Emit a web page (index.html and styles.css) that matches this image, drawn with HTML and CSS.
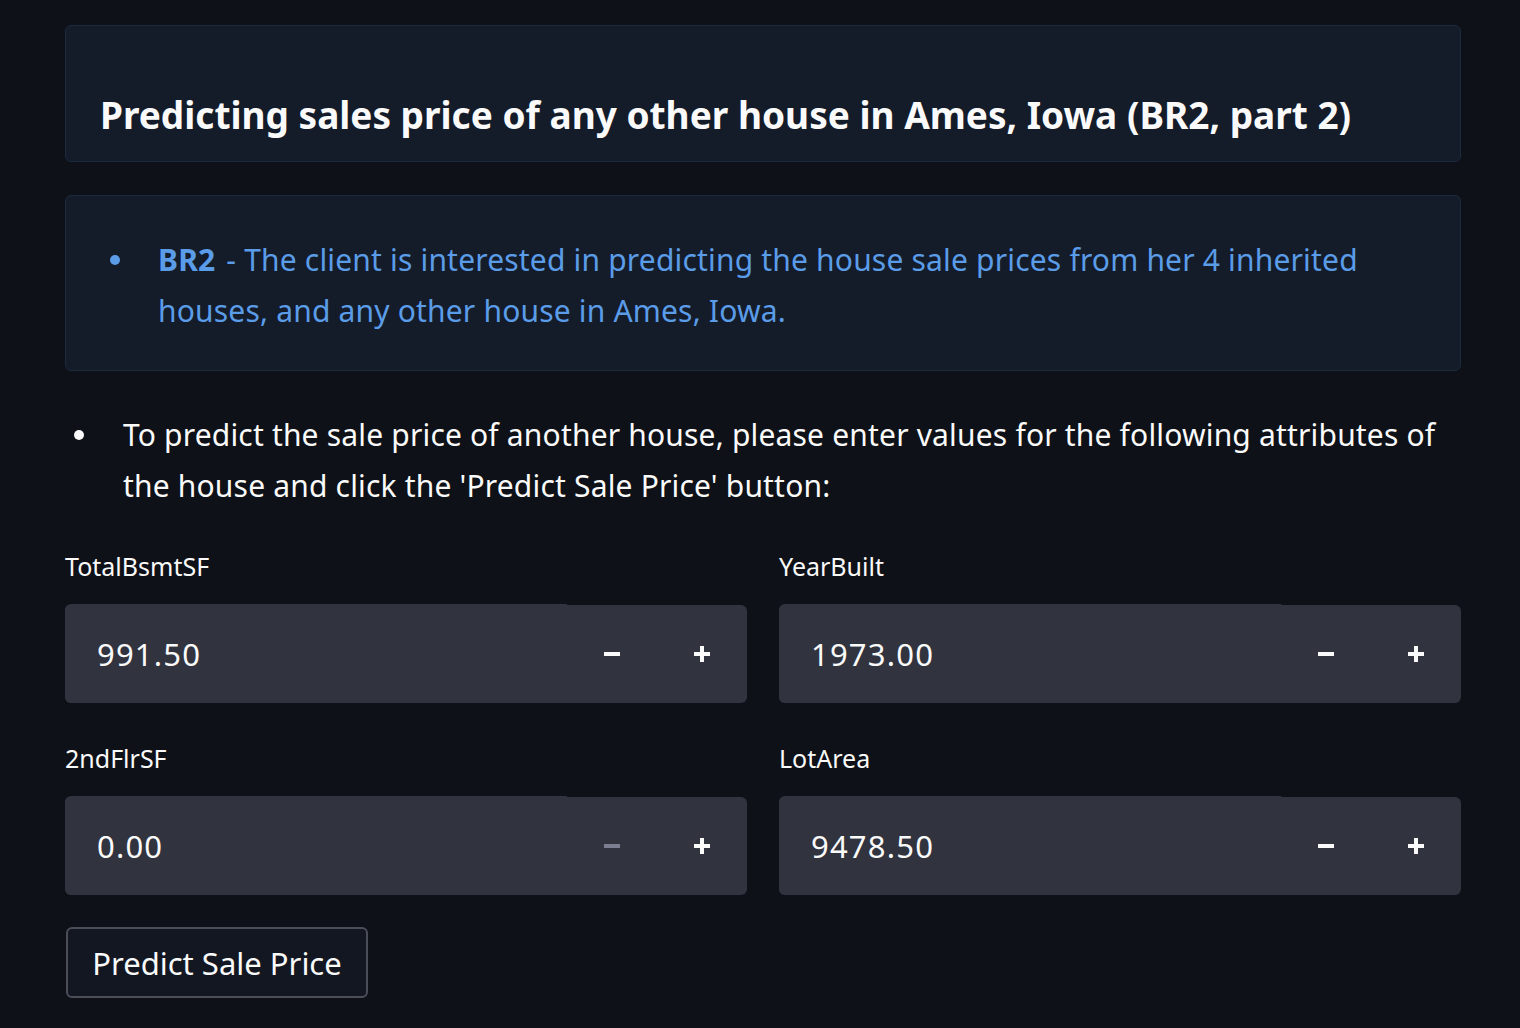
FILE: index.html
```html
<!DOCTYPE html>
<html>
<head>
<meta charset="utf-8">
<link rel="stylesheet" href="styles.css">
</head>
<body>
<main class="page">
  <div class="title-box">
    <h3 class="title">Predicting sales price of any other house in Ames, Iowa (BR2, part 2)</h3>
  </div>
  <div class="info-box">
    <ul class="info-list">
      <li><strong>BR2</strong> - The client is interested in predicting the house sale prices from her 4 inherited houses, and any other house in Ames, Iowa.</li>
    </ul>
  </div>
  <ul class="main-list">
    <li>To predict the sale price of another house, please enter values for the following attributes of the house and click the 'Predict Sale Price' button:</li>
  </ul>
  <div class="grid">
    <div class="field">
      <label class="label">TotalBsmtSF</label>
      <div class="num">
        <div class="num-value">991.50</div>
        <div class="num-btns">
          <span class="btn-step"><span class="minus"></span></span>
          <span class="btn-step"><span class="plus"></span></span>
        </div>
      </div>
    </div>
    <div class="field">
      <label class="label">YearBuilt</label>
      <div class="num">
        <div class="num-value">1973.00</div>
        <div class="num-btns">
          <span class="btn-step"><span class="minus"></span></span>
          <span class="btn-step"><span class="plus"></span></span>
        </div>
      </div>
    </div>
    <div class="field">
      <label class="label">2ndFlrSF</label>
      <div class="num">
        <div class="num-value">0.00</div>
        <div class="num-btns">
          <span class="btn-step"><span class="minus disabled"></span></span>
          <span class="btn-step"><span class="plus"></span></span>
        </div>
      </div>
    </div>
    <div class="field">
      <label class="label">LotArea</label>
      <div class="num">
        <div class="num-value">9478.50</div>
        <div class="num-btns">
          <span class="btn-step"><span class="minus"></span></span>
          <span class="btn-step"><span class="plus"></span></span>
        </div>
      </div>
    </div>
  </div>
  <button class="predict">Predict Sale Price</button>
</main>
</body>
</html>
```

FILE: styles.css
```css
html, body {
  margin: 0;
  padding: 0;
  background: #0e1117;
  color: #fafafa;
  font-family: "Noto Sans", "Open Sans", sans-serif;
}
.page {
  width: 1396px;
  margin-left: 65px;
  padding-top: 25px;
}
.title-box {
  background: #141c2a;
  border: 1px solid #1c2a40;
  border-radius: 6px;
  padding: 62px 34px 20px;
  box-sizing: border-box;
  height: 137px;
}
.title {
  margin: 0;
  font-size: 37px;
  font-weight: 700;
  line-height: 54px;
  color: #fafafa;
}
.info-box {
  margin-top: 33px;
  background: #141c2a;
  border: 1px solid #1c2a40;
  border-radius: 6px;
  box-sizing: border-box;
  height: 176px;
  padding: 38px 34px 0 0;
  color: #5b9ce8;
}
.info-list, .main-list {
  margin: 0;
  list-style: none;
  padding-left: 92px;
  font-size: 30px;
  letter-spacing: 0.18px;
  line-height: 51px;
}
.info-list li, .main-list li {
  position: relative;
}
.info-list li::before, .main-list li::before {
  content: "";
  position: absolute;
  width: 10px;
  height: 10px;
  border-radius: 50%;
  background: currentColor;
  top: 21px;
}
.info-list li::before { left: -48px; }
.main-list li::before { left: -49px; }
.info-list strong {
  font-weight: 700;
  margin-right: 3px;
}
.main-list {
  margin-top: 38px;
  padding-left: 58px;
  color: #fafafa;
}
.grid {
  margin-top: 34px;
  display: grid;
  grid-template-columns: 682px 682px;
  column-gap: 32px;
  row-gap: 34px;
}
.label {
  display: block;
  font-size: 25px;
  line-height: 42px;
  height: 60px;
  color: #fafafa;
}
.num {
  display: flex;
  height: 98px;
  background: #31333f;
  border-radius: 6px;
}
.num-value {
  flex: 0 0 502px;
  box-sizing: border-box;
  padding-left: 32px;
  font-size: 31px;
  letter-spacing: 1.2px;
  display: flex;
  align-items: center;
  color: #fafafa;
  margin-top: -1px;
  background: #31333f;
  border-radius: 6px 0 0 6px;
}
.num-btns {
  flex: 1;
  display: flex;
}
.btn-step {
  width: 90px;
  display: flex;
  align-items: center;
  justify-content: center;
}
.minus {
  width: 16px;
  height: 4px;
  background: #fafafa;
}
.minus.disabled { background: #7c7f8f; }
.plus {
  position: relative;
  width: 16px;
  height: 16px;
}
.plus::before, .plus::after {
  content: "";
  position: absolute;
  background: #fafafa;
}
.plus::before { left: 0; top: 6px; width: 16px; height: 4px; }
.plus::after { left: 6px; top: 0; width: 4px; height: 16px; }
.predict {
  margin-top: 32px;
  margin-left: 1px;
  width: 302px;
  height: 71px;
  background: #131722;
  border: 2px solid #4b4e59;
  border-radius: 6px;
  color: #fafafa;
  font-family: inherit;
  font-size: 31px;
  letter-spacing: 0;
  padding: 0;
}
```
